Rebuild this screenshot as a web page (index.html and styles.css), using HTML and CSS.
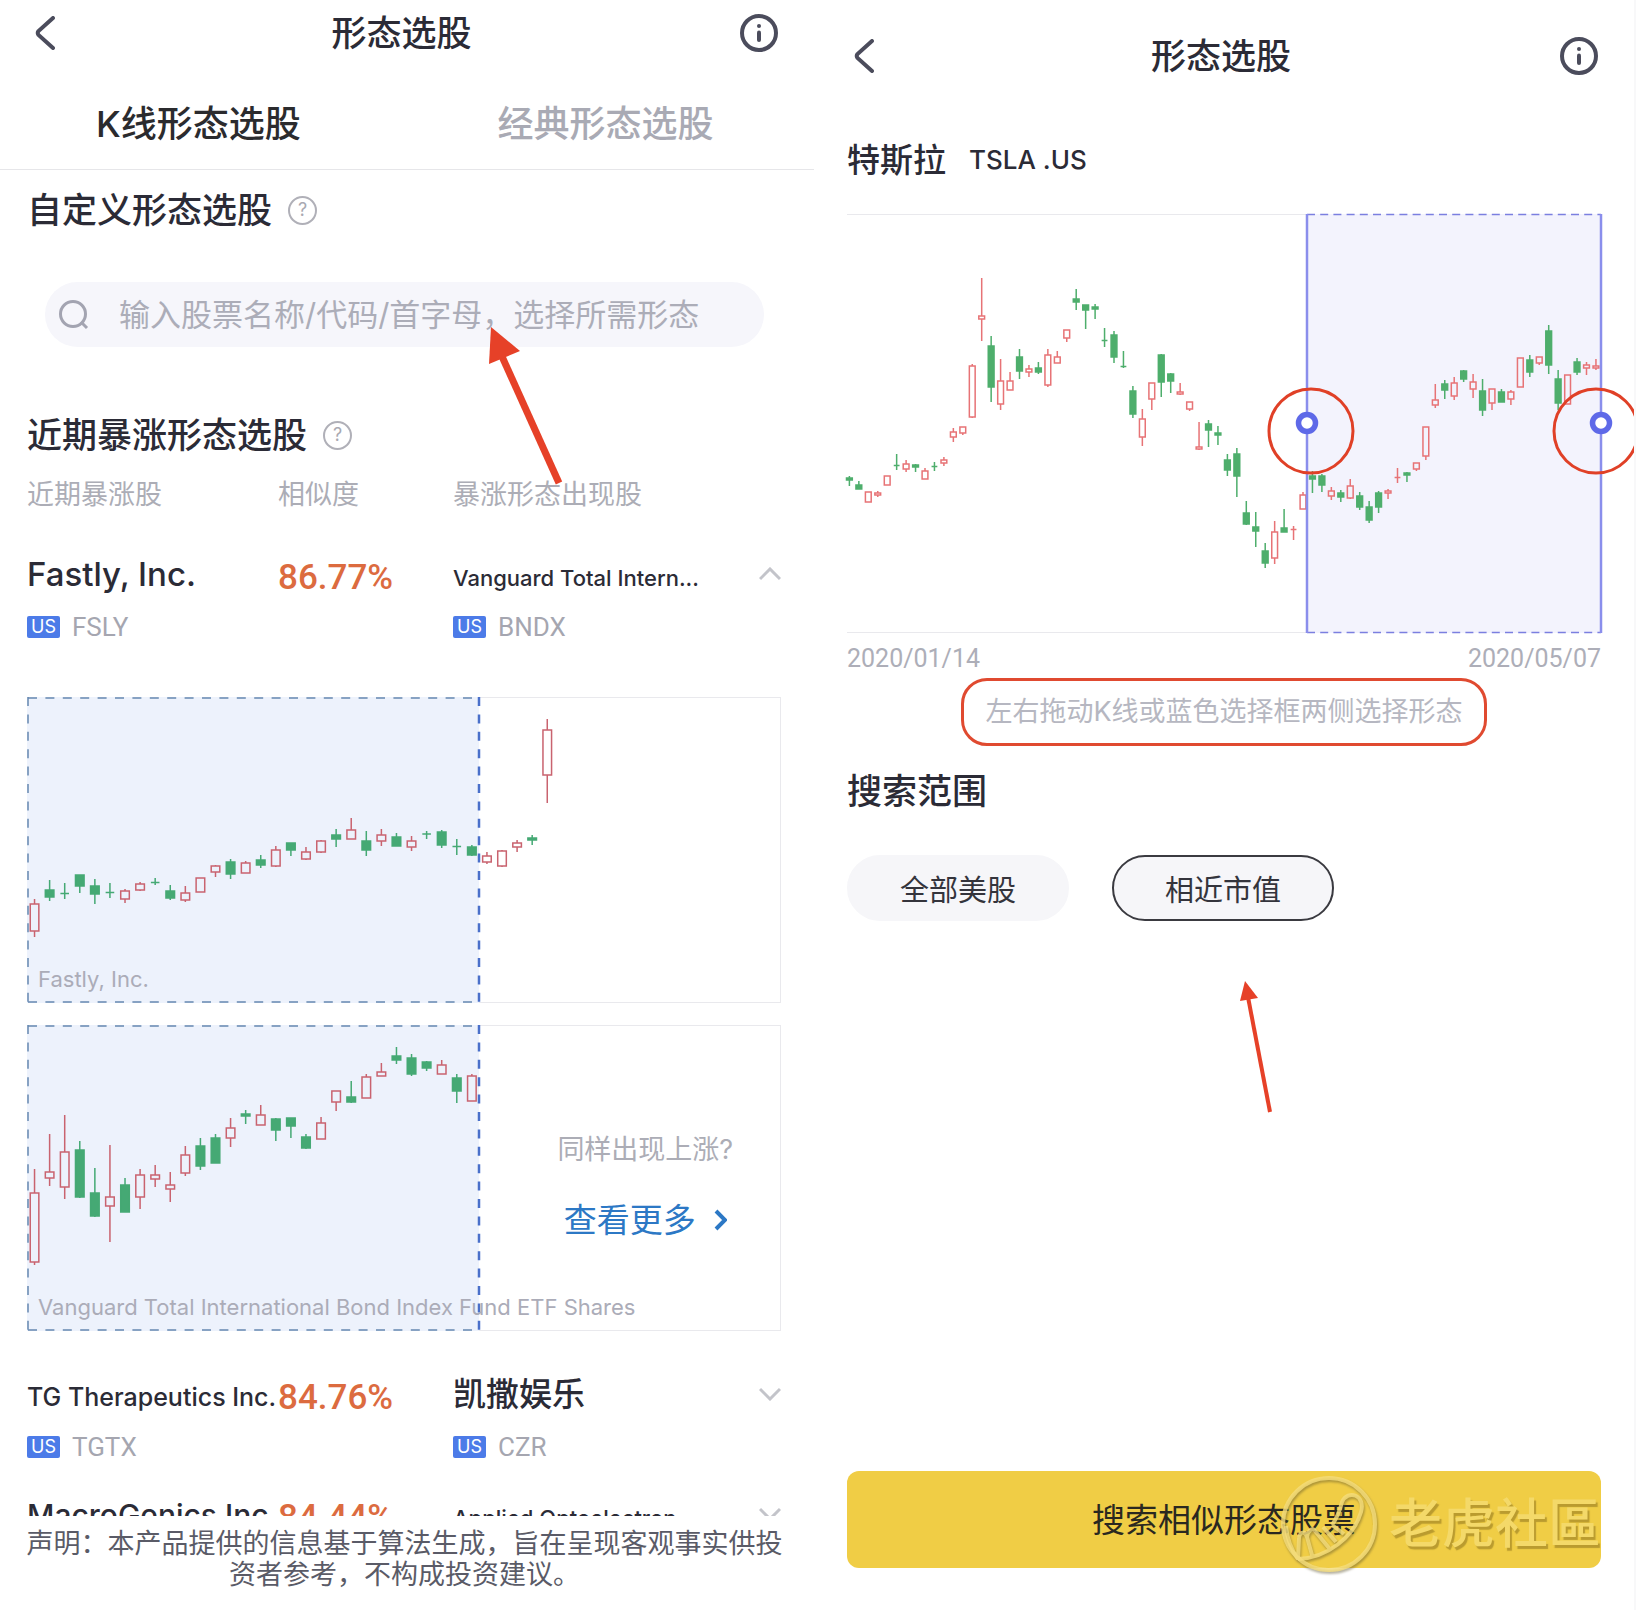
FILE: index.html
```html
<!DOCTYPE html>
<html lang="zh-CN">
<head>
    <meta charset="UTF-8">
    <meta name="viewport" content="width=device-width, initial-scale=1.0">
    <title>形态选股</title>
    <link rel="stylesheet" href="styles.css">
    <script src="charts.js" defer></script>
</head>
<body>
    <main class="screens">
        <section class="screen">
            <header class="topbar">
                <button class="icon-btn back" aria-label="返回">
                    <svg width="20" height="34" viewBox="0 0 20 34"><path d="M18 2 L3.500 15 Q2 17 3.500 19 L18 32" /></svg>
                </button>
                <h1 class="topbar-title">形态选股</h1>
                <button class="icon-btn" aria-label="说明">
                    <svg width="38" height="38" viewBox="0 0 38 38"><circle cx="19" cy="19" r="17" /><path d="M19 18.500 V26" /><path d="M19 11.900 V12.100" /></svg>
                </button>
            </header>
            <nav class="tabs">
                <a class="tab active" href="#kline">K线形态选股</a>
                <a class="tab" href="#classic">经典形态选股</a>
            </nav>
            <div class="content list">
                <h2 class="title">自定义形态选股 <button class="help" aria-label="帮助">?</button></h2>
                <div class="search">
                    <svg class="search-icon" width="30" height="30" viewBox="0 0 30 30"><circle cx="14" cy="14" r="12.500" /><path d="M22 22 L28 28" /></svg>
                    <input class="search-input" type="text" aria-label="搜索股票" placeholder="输入股票名称/代码/首字母，选择所需形态">
                </div>
                <h2 class="title surge-title">近期暴涨形态选股 <button class="help" aria-label="帮助">?</button></h2>
                <table class="stocks">
                    <thead>
                        <tr>
                            <th class="col-name">近期暴涨股</th>
                            <th class="col-rate">相似度</th>
                            <th>暴涨形态出现股</th>
                        </tr>
                    </thead>
                    <tbody>
                        <tr class="stock">
                            <td>
                                <div class="name">Fastly, Inc.</div>
                                <div class="code"><span class="badge">US</span>FSLY</div>
                            </td>
                            <td class="rate">86.77%</td>
                            <td>
                                <div class="name"><span class="small">Vanguard Total Intern...</span>
                                    <button class="toggle" aria-label="收起"><svg width="22" height="14" viewBox="0 0 22 14"><path d="M1 12 L11 2 L21 12" /></svg></button>
                                </div>
                                <div class="code"><span class="badge">US</span>BNDX</div>
                            </td>
                        </tr>
                        <tr>
                            <td class="detail" colspan="3">
                                <div class="chart">
                                    <svg id="chart-fastly" class="candles" viewBox="0 0 754 306"></svg>
                                    <span class="chart-label">Fastly, Inc.</span>
                                </div>
                                <div class="chart">
                                    <svg id="chart-bndx" class="candles" viewBox="0 0 754 306"></svg>
                                    <span class="chart-label">Vanguard Total International Bond Index Fund ETF Shares</span>
                                    <div class="more">
                                        <p class="more-text">同样出现上涨?</p>
                                        <a class="more-link" href="#more">查看更多
                                            <svg width="13" height="22" viewBox="0 0 13 22"><path d="M2 2 L11 11 L2 20" /></svg>
                                        </a>
                                    </div>
                                </div>
                            </td>
                        </tr>
                        <tr class="stock">
                            <td>
                                <div class="name"><span class="medium">TG Therapeutics Inc.</span></div>
                                <div class="code"><span class="badge">US</span>TGTX</div>
                            </td>
                            <td class="rate">84.76%</td>
                            <td>
                                <div class="name">凯撒娱乐
                                    <button class="toggle" aria-label="展开"><svg width="22" height="14" viewBox="0 0 22 14"><path d="M1 2 L11 12 L21 2" /></svg></button>
                                </div>
                                <div class="code"><span class="badge">US</span>CZR</div>
                            </td>
                        </tr>
                        <tr class="stock">
                            <td><div class="name"><span class="large">MacroGenics Inc</span></div></td>
                            <td class="rate">84.44%</td>
                            <td>
                                <div class="name"><span class="small">Applied Optoelectron...</span>
                                    <button class="toggle" aria-label="展开"><svg width="22" height="14" viewBox="0 0 22 14"><path d="M1 2 L11 12 L21 2" /></svg></button>
                                </div>
                            </td>
                        </tr>
                    </tbody>
                </table>
            </div>
            <footer class="notice">声明：本产品提供的信息基于算法生成，旨在呈现客观事实供投资者参考，不构成投资建议。</footer>
            <svg class="arrow arrow-search" width="80" height="164" viewBox="0 0 80 164"><path class="shaft" d="M13 25 L72 156" /><path class="head" d="M4 0 L33 24 L2 37 Z" /></svg>
        </section>

        <section class="screen select-screen">
            <header class="topbar">
                <button class="icon-btn back" aria-label="返回">
                    <svg width="20" height="34" viewBox="0 0 20 34"><path d="M18 2 L3.500 15 Q2 17 3.500 19 L18 32" /></svg>
                </button>
                <h1 class="topbar-title">形态选股</h1>
                <button class="icon-btn" aria-label="说明">
                    <svg width="38" height="38" viewBox="0 0 38 38"><circle cx="19" cy="19" r="17" /><path d="M19 18.500 V26" /><path d="M19 11.900 V12.100" /></svg>
                </button>
            </header>
            <div class="content">
                <h2 class="symbol">特斯拉 <span class="symbol-code">TSLA .US</span></h2>
                <svg id="chart-tsla" class="candles tsla" viewBox="0 0 754 419"></svg>
                <div class="dates"><span>2020/01/14</span><span>2020/05/07</span></div>
                <p class="hint">左右拖动K线或蓝色选择框两侧选择形态</p>
                <h2 class="title range-title">搜索范围</h2>
                <div class="options">
                    <button class="option">全部美股</button>
                    <button class="option selected">相近市值</button>
                </div>
                <div class="bottom">
                    <button class="submit">搜索相似形态股票</button>
                    <div class="watermark">
                        <svg width="100" height="100" viewBox="0 0 100 100">
                            <circle cx="50" cy="50" r="46" />
                            <path d="M19 85 C48 84 75 63 82 38 C87 21 69 15 63 28 C61 36 58 44 53 51 M19 85 C11 74 8 64 7 52 M19 85 L20 64 M20 64 C21 57 26 57 28 63 L33 81 M36 57 L50 74 M44 53 L57 68 M53 51 L65 60 M28 63 C29 56 34 53 36 57" />
                        </svg>
                        <span>老虎社區</span>
                    </div>
                </div>
            </div>
            <svg class="arrow arrow-option" width="36" height="136" viewBox="0 0 36 136"><path class="shaft" d="M9 16 L31 131" /><path class="head" d="M6 0 L19 17 L1 20 Z" /></svg>
        </section>
    </main>
</body>
</html>
```
FILE: styles.css
```css
* {
    box-sizing: border-box;
}
body {
    margin: 0;
    background: #fff;
    color: #2b2b36;
    font-family: Inter, "Noto Sans CJK SC", sans-serif;
    overflow: hidden;
}
h1, h2, p {
    margin: 0;
    font-weight: 500;
}
button, input {
    font-family: inherit;
    color: inherit;
    border: 0;
    padding: 0;
    background: none;
}
button {
    cursor: pointer;
}
svg {
    display: block;
    fill: none;
}
.screens {
    display: grid;
    grid-template-columns: 1fr 1fr;
    height: 100vh;
}
.screen {
    position: relative;
    display: flex;
    flex-direction: column;
    min-width: 0;
    min-height: 0;
    overflow: hidden;
}
.select-screen {
    border-right: 2px solid #f8f8f9;
}
.content {
    flex: 1;
    min-height: 0;
    padding: 0 37px 0 27px;
}
.list {
    overflow: hidden;
}
.select-screen .content {
    display: flex;
    flex-direction: column;
    padding: 0 33px 0 29px;
}

/* top bar */
.topbar {
    display: flex;
    align-items: center;
    height: 66px;
    padding: 0 40px 0 35px;
    flex-shrink: 0;
}
.select-screen .topbar {
    margin-top: 23px;
    padding: 0 36px;
}
.topbar-title {
    flex: 1;
    text-align: center;
    font-size: 35px;
    line-height: 50px;
}
.icon-btn svg {
    stroke: #4b4c5c;
    stroke-width: 4;
    stroke-linecap: round;
}
.back {
    width: 28px;
}

/* tabs */
.tabs {
    display: grid;
    grid-template-columns: 1fr 1fr;
    margin-right: 4px;
    padding-top: 13px;
    border-bottom: 1px solid #e6e6e9;
    flex-shrink: 0;
}
.tab {
    padding-right: 10px;
    text-align: center;
    font-size: 36px;
    line-height: 90px;
    font-weight: 500;
    text-decoration: none;
    color: #a9aab4;
}
.tab.active {
    color: #2b2b2e;
}

.title {
    display: flex;
    align-items: center;
    gap: 16px;
    margin-top: 15px;
    font-size: 35px;
    line-height: 50px;
}
.help {
    width: 29px;
    height: 29px;
    border: 2px solid #b0b0b8;
    border-radius: 50%;
    color: #a9a9b2;
    font-size: 18px;
    line-height: 24px;
}
.search {
    display: flex;
    align-items: center;
    gap: 30px;
    height: 65px;
    margin: 47px 17px 0 18px;
    padding: 0 14px;
    border-radius: 33px;
    background: #f6f6fb;
}
.search-icon {
    stroke: #a3a4b1;
    stroke-width: 3;
    flex-shrink: 0;
}
.search-input {
    flex: 1;
    min-width: 0;
    height: 50px;
    font-size: 31px;
    outline: none;
}
.search-input::placeholder {
    color: #acadb8;
    opacity: 1;
}
.surge-title {
    margin-top: 63px;
}

/* stock table */
.stocks {
    width: 100%;
    table-layout: fixed;
    border-collapse: collapse;
}
.stocks th {
    padding: 15px 0 22px;
    text-align: left;
    font-size: 27px;
    line-height: 40px;
    font-weight: 400;
    color: #acadb6;
}
.stocks .col-name {
    width: 33.3%;
}
.stocks .col-rate {
    width: 23.2%;
}
.stocks td {
    padding: 0;
    vertical-align: top;
}
.stocks .stock td {
    padding: 17px 0 19px;
    white-space: nowrap;
}
.name {
    display: flex;
    align-items: baseline;
    height: 40px;
    margin-bottom: 22px;
    font-size: 33px;
    line-height: 40px;
    font-weight: 500;
}
/* keeps smaller names on the baseline of the full-size ones */
.name::before {
    content: "\200b";
}
.small {
    font-size: 22px;
}
.medium {
    font-size: 25px;
}
.large {
    font-size: 30px;
}
.stocks .rate {
    font-family: Roboto, sans-serif;
    font-size: 35px;
    line-height: 48px;
    font-weight: 500;
    color: #dc6b3f;
}
.code {
    display: flex;
    align-items: center;
    gap: 12px;
    font-family: Roboto, sans-serif;
    font-size: 26px;
    line-height: 22px;
    color: #a5a6b0;
}
.badge {
    width: 33px;
    border-radius: 2px;
    background: #4c7be8;
    color: #fff;
    text-align: center;
    font-family: Inter, sans-serif;
    font-size: 18px;
}
.toggle {
    align-self: center;
    margin-left: auto;
}
.toggle svg {
    stroke: #c3c4ca;
    stroke-width: 3;
}
.stocks .detail {
    padding: 40px 0 26px;
}

/* charts */
.chart {
    position: relative;
}
.chart + .chart {
    margin-top: 22px;
}
.candles {
    width: 100%;
    height: auto;
    overflow: visible;
}
.chart-label {
    position: absolute;
    left: 11px;
    bottom: 9px;
    font-size: 22px;
    line-height: 30px;
    color: #abacb8;
    white-space: nowrap;
}
.more {
    position: absolute;
    top: 0;
    right: 0;
    width: 36%;
    padding-top: 105px;
    text-align: center;
}
.more-text {
    font-size: 27px;
    line-height: 40px;
    font-weight: 400;
    color: #acadb6;
}
.more-link {
    display: flex;
    justify-content: center;
    align-items: center;
    gap: 18px;
    margin-top: 25px;
    font-size: 33px;
    line-height: 50px;
    color: #2c78c5;
    text-decoration: none;
}
.more-link svg {
    stroke: #2c78c5;
    stroke-width: 4;
}
.frame {
    stroke: #e9e9ed;
}
.up {
    fill: none;
    stroke: #c9636f;
    stroke-width: 1.5;
}
.down {
    fill: #45a974;
    stroke: #45a974;
    stroke-width: 1.5;
}
.tsla .up {
    stroke: #e77376;
}
.tsla .down {
    fill: #4eae6c;
    stroke: #4eae6c;
}
.area {
    fill: #edf2fc;
}
.tsla .area {
    fill: #f3f3fd;
}
.edge {
    stroke: #6688b0;
    stroke-width: 1.5;
    stroke-dasharray: 9 8.4;
}
.edge-end {
    stroke: #4a70ca;
    stroke-width: 2.5;
    stroke-dasharray: 9 8.4;
}
.tsla .edge {
    stroke: #7b7fe0;
    stroke-dasharray: 8 5.2;
}
.side {
    stroke: #8a8eec;
    stroke-width: 2.5;
}
.handle {
    fill: #fff;
    stroke: #5e69e8;
    stroke-width: 5.5;
}
.mark {
    stroke: #e04027;
    stroke-width: 3;
}

.notice {
    flex-shrink: 0;
    height: 94px;
    padding: 12px 31px 0 22px;
    text-align: center;
    font-size: 27px;
    line-height: 31px;
    color: #5a5b67;
}

/* pattern selection */
.symbol {
    display: flex;
    align-items: center;
    gap: 23px;
    margin: 46px 0 29px;
    font-size: 33px;
    line-height: 50px;
}
.symbol-code {
    font-size: 26px;
}
.dates {
    display: flex;
    justify-content: space-between;
    margin-top: 6px;
    font-family: Roboto, sans-serif;
    font-size: 25px;
    line-height: 39px;
    color: #adaeb8;
}
.hint {
    align-self: center;
    padding: 0 21px;
    border: 3px solid #e04a30;
    border-radius: 26px;
    font-size: 27px;
    line-height: 62px;
    font-weight: 400;
    color: #b6b7c1;
}
.range-title {
    margin-top: 20px;
}
.options {
    display: flex;
    gap: 43px;
    margin-top: 39px;
}
.option {
    width: 222px;
    height: 66px;
    border: 2px solid #f6f6f9;
    border-radius: 33px;
    background: #f6f6f9;
    color: #34343c;
    font-size: 29px;
}
.option.selected {
    border-color: #3a3a40;
}
.bottom {
    position: relative;
    margin-top: auto;
    margin-bottom: 42px;
}
.submit {
    display: block;
    width: 100%;
    height: 97px;
    padding-bottom: 3px;
    border-radius: 12px;
    background: #f0cd45;
    color: #2a2820;
    font-size: 33px;
}
.watermark {
    position: absolute;
    top: 3px;
    right: 0;
    display: flex;
    align-items: center;
    gap: 10px;
    font-size: 53px;
    line-height: 100px;
    font-weight: 500;
    color: #f4d969;
    text-shadow: 2px 3px 1px rgba(120, 95, 20, 0.45);
    pointer-events: none;
}
.watermark svg {
    stroke: rgba(246, 222, 125, 0.8);
    stroke-width: 4;
    filter: drop-shadow(1px 2px 1px rgba(90, 80, 40, 0.55));
}

/* red pointers */
.arrow {
    position: absolute;
    pointer-events: none;
}
.arrow .shaft {
    stroke: #e64128;
    stroke-width: 7;
}
.arrow .head {
    fill: #e64128;
}
.arrow-search {
    left: 487px;
    top: 327px;
}
.arrow-option {
    left: 421px;
    top: 981px;
}
.arrow-option .shaft {
    stroke-width: 4;
}
```
FILE: charts.js
```javascript
// each candle: direction (r = up, g = down), high, body top, body bottom, low
const fastly = `r 202 207 234 240,g 183 193 200 204,g 186 196 197 202,g 178 178 189 196,g 182 189 197 207,
g 186 195 196 201,r 192 194 202 206,r 185 187 193 194,g 181 185 186 188,g 188 194 201 203,
r 189 196 203 205,r 181 181 195 195,r 168 169 175 180,g 162 165 177 182,r 164 166 176 176,
g 158 163 168 171,r 149 153 169 170,g 146 146 153 159,r 150 155 162 163,r 143 144 155 156,
g 132 138 142 150,r 121 133 142 142,g 134 144 153 159,r 132 138 144 149,g 136 140 149 149,
r 139 144 150 154,g 134 137 137 142,g 133 135 148 151,g 142 149 150 158,g 148 150 158 159,
r 155 159 165 167,r 153 154 169 170,r 143 146 150 155,g 138 141 143 148,r 22 33 78 106`;

const bndx = `r 144 168 237 240,r 109 147 153 161,r 90 127 162 174,g 116 125 172 173,g 143 168 191 192,
r 120 172 181 217,g 153 160 187 187,r 144 150 172 184,r 140 150 154 162,r 147 160 164 177,
r 121 130 148 151,g 113 121 141 145,g 109 113 138 138,r 93 103 113 122,g 85 89 91 99,
r 80 90 100 100,g 93 94 105 116,g 93 93 101 113,g 109 112 123 124,r 92 98 114 114,
r 66 66 77 86,g 56 72 77 78,r 49 52 73 73,r 38 47 51 51,g 22 31 35 39,
g 29 33 49 51,g 36 37 43 46,r 35 40 49 49,g 49 53 66 78,r 49 51 76 76`;

const tsla = `g 262 264 266 272,g 267 271 275 275,r 278 278 288 288,r 277 279 281 283,r 262 262 271 271,
g 240 251 252 256,r 246 250 255 258,g 250 251 253 258,r 254 257 265 265,g 248 252 253 257,
r 243 246 249 252,r 214 218 223 228,r 213 213 219 221,r 150 152 203 204,r 64 102 105 127,
g 122 132 173 188,r 145 167 190 196,r 158 167 176 176,g 135 143 157 165,r 151 155 158 163,
g 148 154 158 160,r 135 141 171 173,r 137 143 149 149,r 116 116 124 128,g 75 85 88 96,
g 91 91 96 115,g 90 93 95 105,g 114 126 127 133,g 117 121 143 149,g 137 152 153 154,
g 172 177 200 204,r 195 205 223 232,r 169 169 185 196,g 140 141 168 183,g 159 160 167 179,
r 169 178 180 181,r 188 188 195 197,r 208 233 235 236,g 206 210 216 233,g 212 219 221 231,
g 240 246 256 262,g 234 240 262 283,g 287 299 310 311,g 298 313 317 333,g 329 337 349 354,
r 307 318 344 350,g 295 314 318 318,r 312 315 316 326,r 278 281 295 295,g 257 262 265 279,
g 260 262 271 278,r 273 277 282 286,g 276 279 283 288,r 265 272 284 285,g 278 282 293 296,
g 287 293 306 309,g 277 279 293 299,r 275 277 279 285,r 254 263 264 269,g 258 259 261 268,
r 249 249 255 257,r 213 213 242 246,r 170 186 191 194,g 166 170 176 185,r 163 169 182 186,
g 156 157 165 168,r 160 168 175 184,g 165 177 196 202,r 175 175 189 196,g 175 178 188 188,
r 176 178 185 191,r 144 144 173 173,g 141 146 158 163,r 143 143 149 151,g 111 117 151 160,
g 156 165 189 196,r 161 161 190 190,g 144 148 158 161,r 148 151 154 161,r 145 152 154 156`;

function candles(data, start, step, width) {
    return data.split(',').map((item, i) => {
        const [dir, ...values] = item.trim().split(' ');
        const [high, top, bottom, low] = values.map(Number);
        const x = start + i * step;
        const h = bottom - top;
        // open and close almost equal: a plain cross
        const body = h < 2 ? `M${x - width / 2} ${top + h / 2}h${width}` : `M${x - width / 2} ${top}h${width}v${h}h${-width}Z`;
        return `<path class="${dir === 'r' ? 'up' : 'down'}" d="M${x} ${high}V${top}M${x} ${bottom}V${low}${body}"/>`;
    }).join('');
}

function patternChart(id, data) {
    document.getElementById(id).innerHTML = `
        <rect class="frame" x="0.5" y="0.5" width="753" height="305"/>
        <rect class="area" x="0" y="0" width="452" height="306"/>
        <path class="edge" d="M1 0V306"/>
        <path class="edge" d="M1 1H452"/>
        <path class="edge" d="M1 305H452"/>
        <path class="edge-end" d="M452 0V306"/>
        ${candles(data, 7.54, 15.08, 8.6)}`;
}

patternChart('chart-fastly', fastly);
patternChart('chart-bndx', bndx);

document.getElementById('chart-tsla').innerHTML = `
    <path class="frame" d="M0 0.5H754M0 418.5H754"/>
    <rect class="area" x="460" y="0" width="294" height="419"/>
    <path class="edge" d="M460 0.500H754M460 418.500H754"/>
    ${candles(tsla, 2.4, 9.45, 5.8)}
    <path class="side" d="M460 0V419M754 0V419"/>
    <circle class="handle" cx="460" cy="209" r="8.5"/>
    <circle class="handle" cx="754" cy="209" r="8.5"/>
    <circle class="mark" cx="464" cy="217" r="42"/>
    <circle class="mark" cx="749" cy="217" r="42"/>`;
```
